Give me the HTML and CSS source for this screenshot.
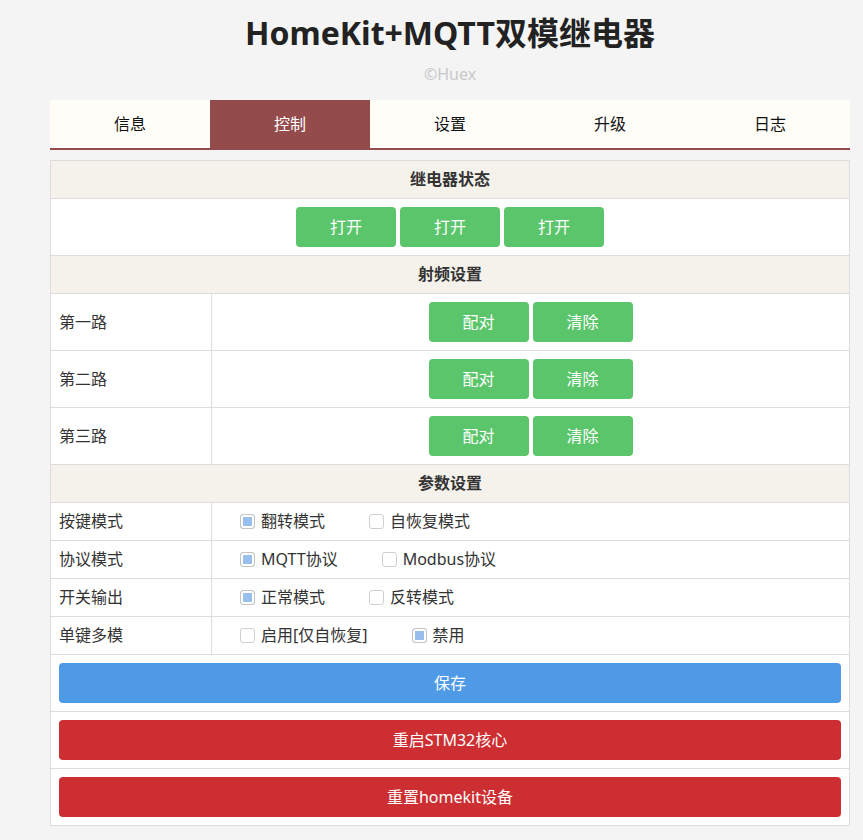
FILE: index.html
```html
<!DOCTYPE html>
<html lang="zh-CN">
<head>
<meta charset="utf-8">
<title>HomeKit+MQTT双模继电器</title>
<link rel="stylesheet" href="styles.css">
</head>
<body>
<div class="wrap">
  <h1 class="title">HomeKit+MQTT双模继电器</h1>
  <p class="sub">©Huex</p>
  <nav class="tabs">
    <a class="tab">信息</a>
    <a class="tab active">控制</a>
    <a class="tab">设置</a>
    <a class="tab">升级</a>
    <a class="tab">日志</a>
  </nav>
  <table class="panel">
    <colgroup><col class="c1"><col></colgroup>
    <tr><th colspan="2" class="head">继电器状态</th></tr>
    <tr><td colspan="2" class="btns center">
      <button class="btn green">打开</button><button class="btn green">打开</button><button class="btn green">打开</button>
    </td></tr>
    <tr><th colspan="2" class="head">射频设置</th></tr>
    <tr><td class="label">第一路</td><td class="btns center"><button class="btn green">配对</button><button class="btn green">清除</button></td></tr>
    <tr><td class="label">第二路</td><td class="btns center"><button class="btn green">配对</button><button class="btn green">清除</button></td></tr>
    <tr><td class="label">第三路</td><td class="btns center"><button class="btn green">配对</button><button class="btn green">清除</button></td></tr>
    <tr><th colspan="2" class="head">参数设置</th></tr>
    <tr><td class="label">按键模式</td><td class="opts">
      <label class="opt"><input type="checkbox" class="cb" checked>翻转模式</label><label class="opt"><input type="checkbox" class="cb">自恢复模式</label>
    </td></tr>
    <tr><td class="label">协议模式</td><td class="opts">
      <label class="opt"><input type="checkbox" class="cb" checked>MQTT协议</label><label class="opt"><input type="checkbox" class="cb">Modbus协议</label>
    </td></tr>
    <tr><td class="label">开关输出</td><td class="opts">
      <label class="opt"><input type="checkbox" class="cb" checked>正常模式</label><label class="opt"><input type="checkbox" class="cb">反转模式</label>
    </td></tr>
    <tr><td class="label">单键多模</td><td class="opts">
      <label class="opt"><input type="checkbox" class="cb">启用[仅自恢复]</label><label class="opt"><input type="checkbox" class="cb" checked>禁用</label>
    </td></tr>
    <tr><td colspan="2" class="btns"><button class="btn wide blue">保存</button></td></tr>
    <tr><td colspan="2" class="btns"><button class="btn wide red">重启STM32核心</button></td></tr>
    <tr><td colspan="2" class="btns"><button class="btn wide red">重置homekit设备</button></td></tr>
  </table>
</div>
</body>
</html>
```

FILE: styles.css
```css
html, body {
  margin: 0;
  padding: 0;
  background: #f4f4f4;
  font-family: "Noto Sans", "Noto Sans CJK SC", sans-serif;
  color: #333;
}
.wrap {
  width: 800px;
  margin: 0 0 0 50px;
  padding-bottom: 14px;
}
.title {
  margin: 13px 0 0;
  font-size: 32px;
  line-height: 40px;
  font-weight: bold;
  text-align: center;
  color: #222;
}
.sub {
  margin: 9px 0 14px;
  font-size: 16px;
  line-height: 24px;
  text-align: center;
  color: #c8c8c8;
}
.tabs {
  display: flex;
  border-bottom: 2px solid #954b4b;
}
.tab {
  flex: 0 0 160px;
  height: 48px;
  line-height: 48px;
  text-align: center;
  font-size: 16px;
  color: #111;
  background: #fffdf8;
}
.tab.active {
  background: #944b4b;
  color: #fff;
}
.panel {
  width: 800px;
  margin-top: 10px;
  border-collapse: collapse;
  table-layout: fixed;
  background: #fff;
}
.c1 { width: 161px; }
.panel th, .panel td {
  border: 1px solid #ddd;
  font-size: 16px;
  line-height: 21px;
  height: 21px;
  padding: 8px;
}
.head {
  background: #f5f2ec;
  font-weight: bold;
  text-align: center;
  color: #333;
}
.label {
  text-align: left;
  color: #333;
}
.center { text-align: center; }
.panel td.btns {
  font-size: 0;
  line-height: 0;
  height: 40px;
}
.btn {
  display: inline-block;
  vertical-align: top;
  width: 100px;
  height: 40px;
  margin: 0 2px;
  border: none;
  border-radius: 4px;
  font-family: inherit;
  font-size: 16px;
  line-height: 40px;
  padding: 0;
  color: #fff;
}
.green { background: #5bc56b; }
.blue { background: #4e9ae6; }
.red { background: #cc2e31; }
.btn.wide {
  width: 100%;
  margin: 0;
}
.panel td.opts {
  padding: 8px 8px 8px 28px;
  white-space: nowrap;
}
.opt {
  display: inline-flex;
  align-items: center;
  vertical-align: top;
  height: 21px;
  margin-right: 44px;
  color: #333;
}
.cb {
  appearance: none;
  -webkit-appearance: none;
  flex: 0 0 auto;
  width: 15px;
  height: 15px;
  margin: 0 6px 0 0;
  border: 1px solid #cfcfcf;
  border-radius: 3px;
  background: #fff;
  box-sizing: border-box;
}
.cb:checked {
  background: #99bfee;
  box-shadow: inset 0 0 0 2px #fff;
  border-color: #c4c4c4;
}
```
